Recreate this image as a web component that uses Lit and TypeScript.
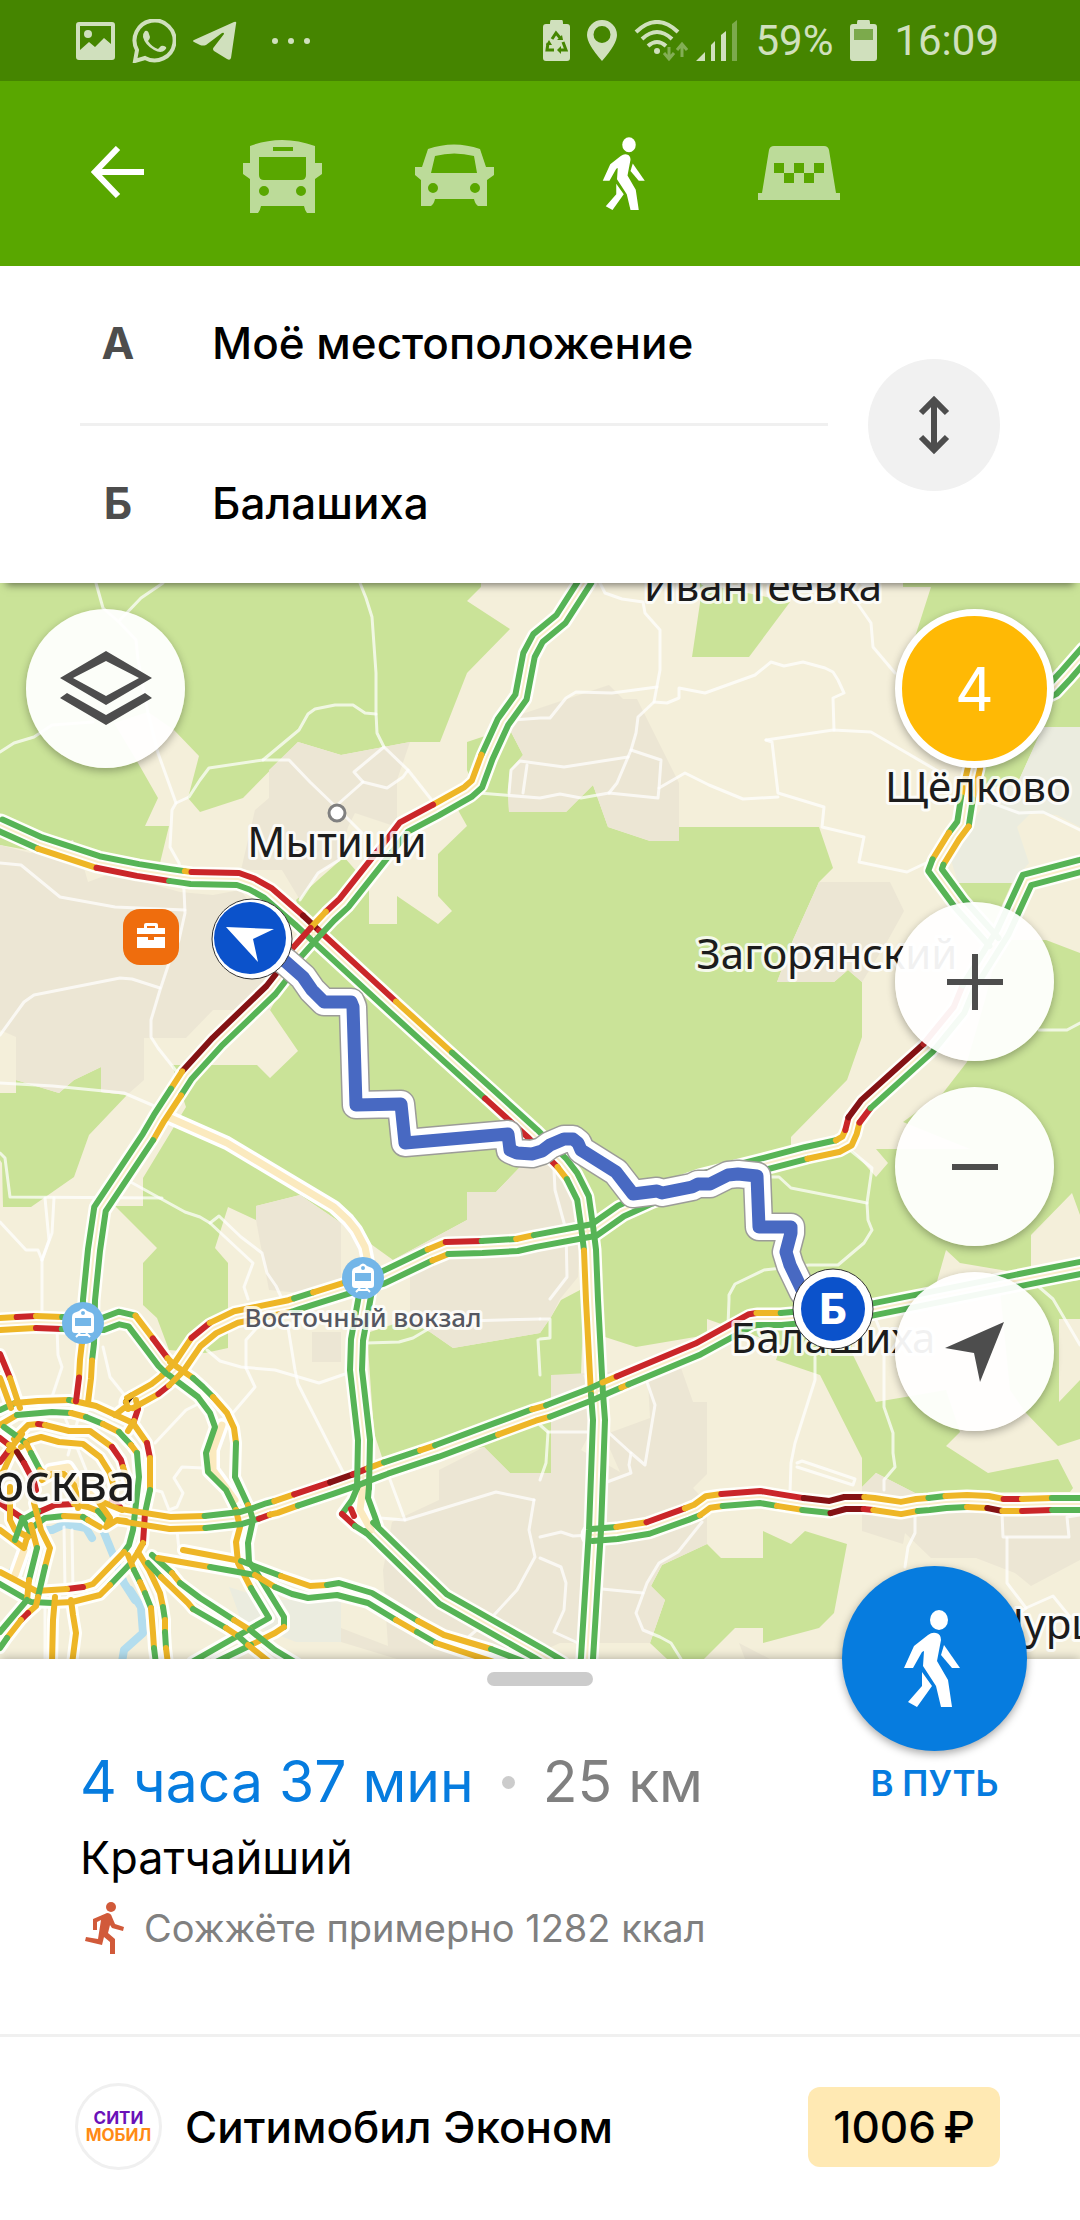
import { LitElement, html, svg, css } from "lit";
import { customElement, state } from "lit/decorators.js";

/* ---------- map data ---------- */

type Pt = [number, number];

const COLORS: Record<string, string> = {
  g: "#57b456",
  y: "#eeb626",
  r: "#ca2629",
  d: "#841214",
  k: "#2a0c0c",
};

const GREEN = [
  "0,583 481,583 481,587 467,601 510,629 467,673 440,742 410,742 341,755 298,742 243,798 200,812 188,798 199,756 174,730 148,712 114,723 138,763 158,798 145,826 169,826 160,863 150,874 60,856 0,845",
  "467,742 482,737 510,730 523,755 510,770 508,793 509,812 566,812 593,785 608,827 650,841 679,841 679,827 819,827 833,868 819,882 793,940 777,982 834,982 848,970 862,982 862,1037 847,1080 791,1137 791,1147 852,1150 876,1177 888,1163 876,1149 970,1149 903,1122 943,1093 967,1062 985,1000 1000,940 1046,940 1080,953 1080,1215 1072,1193 1031,1235 1031,1275 960,1263 946,1250 936,1285 872,1315 852,1325 852,1353 876,1402 946,1390 960,1432 946,1446 988,1473 1058,1459 1073,1488 1070,1492 915,1493 876,1473 862,1487 862,1458 820,1375 776,1360 781,1345 707,1319 707,1335 636,1347 605,1337 592,1300 583,1210 570,1180 540,1150 520,1167 496,1192 467,1192 467,1220 393,1260 368,1242 341,1223 300,1195 256,1206 256,1220 228,1207 215,1248 228,1263 228,1348 205,1353 169,1350 157,1318 143,1305 143,1263 157,1248 115,1206 143,1206 143,1178 186,1107 172,1065 257,1065 270,1078 298,1051 270,1010 305,950 369,878 369,924 397,924 397,896 438,924 452,911 438,896 438,854 467,826 458,810 475,790 467,770",
  "344,857 358,873 305,925 296,900 318,880",
  "16,1080 59,1093 74,1080 101,1067 101,1092 127,1095 89,1135 74,1177 31,1207 3,1207 2,1163 0,1160 0,1093 16,1093",
  "700,583 790,602 749,657 692,657 700,603",
  "903,583 1080,583 1080,727 1043,727 1019,780 985,790 915,660 915,637 931,587 903,587",
  "958,883 1012,883 990,932 974,912",
  "367,1333 406,1320 430,1332 453,1348 540,1333 551,1317 561,1300 580,1290 583,1320 581,1375 551,1375 551,1473 510,1473 484,1447 384,1463 374,1433",
  "1000,1290 1080,1280 1080,1319 1059,1319 1059,1402 1080,1380 1080,1439 1058,1446 1026,1413 1010,1390",
  "662,1565 707,1544 721,1558 763,1558 763,1531 791,1544 805,1531 847,1544 834,1613 819,1628 763,1643 763,1628 735,1628 704,1659 667,1659 650,1643 665,1600 651,1586",
];

const URBAN = [
  "298,742 341,755 410,742 397,780 397,827 355,813 348,827 339,860 318,873 300,900 282,870 241,870 255,810 269,798 269,770",
  "0,845 30,853 73,840 84,868 88,882 112,873 180,892 213,895 240,890 290,950 270,1010 213,1010 186,1038 144,1038 144,1080 127,1095 101,1092 101,1067 74,1080 59,1093 16,1080 16,1037 0,1030",
  "256,1206 300,1195 341,1223 341,1278 320,1295 269,1290 256,1220",
  "393,1260 467,1220 467,1192 496,1192 520,1167 560,1165 580,1220 578,1277 560,1299 551,1317 540,1333 453,1348 430,1332 410,1320 410,1268",
  "513,717 540,708 609,685 623,699 637,699 679,783 679,841 650,841 608,827 593,785 566,812 509,812 508,793 510,770 523,755 510,730",
  "819,882 890,882 904,911 888,940 862,982 848,970 834,982 777,982 793,940",
  "551,1375 681,1368 693,1402 707,1402 707,1474 693,1488 707,1503 707,1544 662,1565 651,1586 665,1600 650,1643 560,1643 540,1652 500,1659 397,1659 341,1642 341,1628 388,1646 383,1570 392,1522 439,1500 439,1470 484,1447 510,1473 551,1473",
  "312,1332 341,1332 341,1362 312,1362",
  "862,1487 876,1473 915,1493 1080,1500 1080,1560 1031,1586 1015,1573 976,1558 931,1558 905,1533 903,1544 862,1531",
  "739,1643 770,1659 745,1659",
];

const SAND = ["609,1433 583,1375 648,1382 650,1418", "581,1450 597,1420 620,1472"];

const GREY = [
  "1043,727 1080,727 1080,827 1057,815 1031,813 1017,827 1029,863 1012,883 958,883 951,860 988,797 1019,780",
  "229,1587 269,1600 341,1600 341,1642 296,1642 241,1620",
];

const LANES_MINOR = [
  "96,583 103,608 120,623 136,640 138,660 148,713 158,753 176,803 172,810 170,847 179,863 184,890 185,913 179,940 169,963 160,990 151,1020 151,1037 158,1048 177,1072",
  "163,583 141,598 120,620",
  "0,752 14,743 34,737 52,725 93,722",
  "360,583 366,598 372,617 376,673 376,713 377,733 384,747 408,770 434,803",
  "176,803 189,797 200,780 209,768 263,760 289,760 310,782 336,807 362,833",
  "263,760 299,730 308,714 315,709 335,705 353,705 365,713 376,714",
  "337,805 363,782 387,788 403,777 408,770",
  "363,782 354,772 384,747",
  "0,863 21,865 60,897 115,907 185,910",
  "300,900 318,873 339,860",
  "600,583 605,593 622,599 643,602 645,613 660,630 660,670 654,702 638,717 636,733 631,750 617,783 609,793",
  "513,720 540,718 550,718 566,698 576,692 612,693 657,687",
  "654,702 667,703 679,698 679,688 705,693 755,675 771,662 784,666 803,662 825,668 833,672 838,680 844,693 833,698 834,730",
  "766,740 833,730 871,732 936,770",
  "766,740 772,742 778,793 824,807 822,827 864,837 859,862 907,872 926,863",
  "778,797 743,799 709,785 685,773 659,788 661,760 631,750",
  "659,788 658,798 609,793 581,798 560,794 540,798 479,793",
  "509,793 511,770 520,761 564,767 628,757",
  "523,793 527,765",
  "848,590 871,623 873,647 895,673",
  "984,800 1019,813 1043,812 1080,830",
  "771,1177 779,1177 791,1188 867,1203 872,1168 850,1150",
  "867,1203 868,1220 872,1230 864,1243 838,1265 809,1265 764,1270 735,1284 729,1295 729,1300 728,1325",
  "1039,1030 1067,1030 1080,1023",
  "1039,1287 1053,1299 1080,1345",
  "554,1170 555,1190 566,1230 567,1277 550,1299",
  "815,1357 815,1380 795,1443 791,1463 790,1492",
  "797,1463 802,1461 855,1479 853,1485 797,1467",
  "876,1320 884,1340 884,1407 893,1433 893,1453 895,1467 884,1480 884,1490",
  "607,1482 631,1473 629,1465 631,1453 645,1465 652,1423 655,1405 647,1382",
  "609,1433 631,1453",
  "702,1522 678,1552 659,1563 647,1583 636,1613 643,1630 660,1637 671,1643 681,1659",
  "602,1589 643,1593",
  "540,1558 561,1567 566,1583 564,1610 554,1632 578,1643",
  "540,1537 561,1532 573,1536 592,1535",
  "540,1425 548,1432 590,1432",
  "548,1432 546,1463 540,1480",
  "540,1319 550,1319 550,1338 540,1339",
  "915,1513 915,1533 908,1547 905,1567",
  "1002,1513 1003,1537 1069,1537 1067,1517 1080,1515",
  "1007,1538 1007,1583 1026,1608",
  "1018,1614 1026,1608 1053,1596 1070,1617",
  "0,1083 53,1086 124,1093 152,1105 170,1115",
  "0,1153 5,1158 10,1197 162,1198",
  "127,1180 185,1212 200,1217 210,1223 253,1263 244,1287 248,1299",
  "210,1223 219,1216 241,1237 258,1250 262,1253 267,1273 276,1286 282,1299",
  "0,1222 26,1250 38,1250 42,1260 42,1330",
  "45,1198 49,1240 42,1260",
  "54,1198 52,1233 42,1260",
  "0,1035 24,1002 34,995 120,978 132,979 160,988",
  "57,1328 58,1355 62,1367 52,1397",
  "103,1347 110,1377 126,1397",
  "207,1350 220,1361 241,1367 275,1370 319,1383 348,1373",
  "246,1368 255,1387 238,1407 224,1423",
  "246,1368 246,1340 262,1322",
  "288,1327 295,1370 298,1384 343,1472",
  "155,1443 186,1410 200,1403",
  "367,1343 399,1342 413,1338 430,1328",
  "430,1322 540,1319",
  "389,1477 405,1520 496,1492 534,1500",
  "380,1518 405,1520",
  "534,1500 529,1530 535,1557 517,1590 494,1615 465,1640",
  "538,1340 540,1375",
  "203,1468 182,1467 174,1478 183,1493 177,1507 169,1510 162,1492 155,1490",
  "64,1527 65,1587",
  "72,1530 73,1590",
  "45,1580 45,1659",
  "62,1410 78,1450 86,1470",
  "82,1405 68,1455",
  "177,1530 179,1550",
];

const RIVERS = [
  "12,1572 28,1555 33,1530 52,1530 65,1524 86,1528 92,1538",
  "103,1530 114,1557 124,1583 135,1600",
  "130,1590 141,1607 143,1633 124,1650 122,1662",
];

const BEIGE_ROADS = [
  "168,1117 227,1143 334,1207 348,1220 356,1230 365,1247 368,1262",
  "222,1425 213,1450 213,1470 235,1500",
  "50,1470 68,1467 78,1482 96,1500",
  "15,1575 24,1550",
  "363,1486 360,1510 371,1530",
];

/* Dual carriageways: centre line, with ":LR" giving the traffic colour of the
   left and the right side from that point on. */
const DUAL = [
  "0,825:gg 40,843:gy 98,862:gr 138,870:gr 170,875:gg 184,877:yg 191,878:rg 238,879:rg 252,884:rg 268,893:rg 299,920:dg 315,935:rg 392,1006:yg 448,1057:gg 489,1094:gr 533,1134:gr 562,1163:gy 572,1176:gg 583,1198:gg 587,1226:gg 590,1250:gy 592,1300:gy 597,1394:gg 599,1420:gg 595,1530:gg 587,1658:gg 586,1664",
  "586,580:gg 561,619:gg 538,638:gg 529,655:gg 521,697:gg 503,722:gg 487,757:gy 477,784:gy 468,792:gy 436,810:gr 404,827:gr 394,840:gr 344,903:gr 330,916:gy 315,932:gr 290,960:gr 285,972:gd 271,990:gd 217,1042:gd 187,1075:gy 176,1092:yg 159,1118:yg 148,1137:gg 100,1209:gg 94,1250:gg 89,1300:gg 88,1343:gy 86,1360:yy 85,1378:yr 82,1402",
  "130,1403:yy 155,1389:yr 165,1381:yy 179,1367:yy 196,1342:ry 213,1328:yy 236,1317:yy 290,1306:yg 296,1304:gg 315,1298:yg 347,1288:gg 382,1278:gg 430,1255:yy 447,1248:rg 482,1247:gg 517,1245:yg 535,1241:gg 594,1230:gg 621,1211:gg 650,1198:gg 700,1180:gg 760,1165:gg 806,1153:gy 838,1146:yy 847,1141:yy 851,1132:ry 854,1120:dr 866,1104:dg 928,1048:rg 959,1010:rg 968,988:gg 1003,932:gg 1027,880:gg 1080,866:gg 1086,865",
  "1086,652:gg 1066,675:gg 1053,689:gg 1000,715:gg 976,740:yy 974,768:yy 967,798:gg 963,824:yg 954,836:yy 938,862:gg 935,870:gg 960,904:gg 994,942:gg",
  "120,1515:yy 170,1523:yy 205,1522:gg 241,1518:gg 257,1513:gr 268,1509:gy 276,1507:yy 296,1500:rg 332,1488:dg 355,1480:rg 370,1474:yg 386,1468:gg 422,1456:yg 437,1451:gg 496,1429:gy 534,1415:yy 548,1411:gg 592,1394:gg 605,1388:yg 619,1382:ry 626,1379:rg 698,1349:rg 751,1320:rg 757,1319:yg 781,1319:gg 860,1312:gg 1015,1281:gg 1080,1268:gg 1086,1267",
  "592,1535:gg 617,1533:yg 648,1528:rg 687,1514:yg 697,1510:yy 708,1502:yy 722,1500:rg 760,1497:rg 778,1500:ry 803,1504:dg 830,1507:dd 845,1503:dd 864,1503:yr 874,1504:yy 901,1508:yy 917,1505:yg 929,1504:gg 946,1502:yg 967,1501:yy 988,1502:yd 1003,1505:ry 1022,1505:yr 1052,1504:gg 1086,1504",
  "366,1290:gg 357,1340:gg 356,1370:gg 364,1440:gg 363,1488",
  "369,1527:gg 443,1599:gg 540,1654:gg 560,1666",
  "0,1324:yy 17,1323:ry 36,1322:yr 62,1323:gg 103,1324:gg 119,1318:gg 132,1321:yg 148,1342:rg 163,1362:yg 170,1369",
];

/* Single carriageways: ":C" is the traffic colour from that point on. */
const SINGLE = [
  "170,1362:y 193,1378:g 203,1387:g 213,1397:y 227,1413:y 234,1428:y 236,1443:g 235,1477:g 248,1505:y 250,1510:g 253,1520:g 248,1543:g 249,1562:g 257,1573:g 284,1617:g 284,1627:y 275,1633:y 251,1645:g 216,1662",
  "166,1373:g 198,1397:g 210,1413:g 215,1427:g 206,1453:g 208,1472:g 226,1490:g 236,1510:y 240,1527:y 236,1542:y 238,1563:y 251,1588:g 269,1618:g 248,1630:g 192,1662",
  "0,1410:g 15,1403:y 38,1401:y 69,1400:g 74,1401:y 96,1406:y 133,1423:y 147,1443:r 150,1458:y 150,1490:g 145,1513:r 143,1543:y 138,1552:y 131,1563:g 110,1585:y 100,1595:y 72,1602:y 53,1603:g 31,1602:g 0,1584",
  "0,1425:y 17,1415:g 52,1412:g 71,1413:y 86,1417:g 103,1424:y 119,1432:g 131,1445:y 137,1453:g 139,1477:g 133,1530:g 129,1545:g 124,1552:y 93,1584:y 83,1587:r 67,1589:y 36,1591:y 0,1572",
  "14,1439:y 28,1425:y 38,1424:r 45,1425:y 69,1431:y 90,1431:y 112,1447:r 121,1460:r 123,1467:y 128,1482",
  "21,1447:y 30,1440:y 41,1437:y 59,1442:y 83,1444:y 100,1457:y 110,1473:y 114,1487:y 112,1500:r 120,1507",
  "34,1514:r 55,1505:r 74,1504:y 88,1507:y 98,1511:g 106,1520:y",
  "33,1527:g 45,1518:g 64,1516:y 83,1517:g 88,1520:y 100,1527",
  "98,1501:y 110,1518:y 106,1527:y 117,1520:y 126,1521",
  "100,1501:y 122,1510",
  "12,1452:y 4,1470:y 0,1476",
  "0,1530:y 24,1548:y 28,1534",
  "0,1503:r 22,1518:g 32,1535:g",
  "10,1487:y 10,1520:y 15,1530:y 28,1537",
  "15,1540:g 22,1520:g 38,1511",
  "0,1354:r 10,1378:y 20,1408",
  "0,1378:y 11,1408",
  "4,1427:g 26,1443:y 31,1453:g 40,1470:y 48,1476",
  "0,1438:r 9,1445:y 17,1452:d 24,1463:r 34,1482:r 36,1490",
  "0,1462:r 9,1450:y 22,1434",
  "42,1480:y 52,1474:y 64,1474:y 74,1485:y 78,1500:y 78,1508",
  "34,1503:y 41,1530:y 50,1548:y 45,1567:g 38,1597:y 36,1606:y 28,1613:r 21,1620:y 7,1638:g 0,1648",
  "31,1525:y 37,1548:g 29,1580:y 27,1600:g 0,1632",
  "55,1597:y 53,1620:y 52,1664",
  "71,1600:y 73,1615:y 76,1633:y 72,1664",
  "128,1555:y 134,1570:g 140,1582:y 145,1593:g 151,1608:y 153,1633:y 154,1648:g 156,1664",
  "138,1552:y 149,1570:y 160,1593:y 163,1607:g 165,1620:y 165,1632:g 166,1648:y 168,1664",
  "152,1555:g 172,1573:y 180,1583:g 200,1598:g 234,1620:y 250,1630:g 275,1650:g 298,1664",
  "148,1563:g 161,1577:y 188,1603:y 193,1609:g 226,1628:y 238,1636:g 248,1645:y 272,1664",
  "183,1550:y 241,1561:g 281,1576:y 310,1586:y 327,1585:g 339,1583:g 372,1593:g 418,1621:y 444,1635:y 491,1649:g 530,1664",
  "158,1558:y 210,1567:g 255,1575:y 275,1587:g 292,1594:g 308,1598:g 337,1595:g 368,1603:g 396,1620:y 417,1632:g 436,1643:y 460,1651:y 500,1664",
  "136,1400:y 138,1409:r 134,1421:y 128,1431",
  "115,1415:y 124,1408:y 130,1408",
  "131,1396:k 126,1402:y 128,1409",
  "369,1486:g 368,1498:g 375,1517:g 378,1526",
  "358,1486:g 352,1500:g 342,1514:r 355,1526:g 366,1533",
  "351,1509:r 354,1516",
];

const ROUTE =
  "262,945 286,962 303,977 312,990 324,1002 351,1002 353,1007 356,1105 401,1104 405,1143 508,1134 510,1150 517,1153 532,1154 542,1151 550,1145 564,1139 573,1139 578,1143 581,1150 616,1172 633,1194 657,1191 662,1193 692,1187 698,1184 710,1184 728,1175 738,1174 757,1176 759,1227 791,1227 791,1233 786,1252 790,1265 803,1292 833,1308";

interface Label {
  text: string;
  x: number;
  y: number;
  cls: string;
}

const LABELS: Label[] = [
  { text: "Ивантеевка", x: 763, y: 601, cls: "town mid" },
  { text: "Щёлково", x: 978, y: 802, cls: "town mid" },
  { text: "Мытищи", x: 337, y: 857, cls: "town mid" },
  { text: "Загорянский", x: 827, y: 969, cls: "town mid" },
  { text: "Балашиха", x: 833, y: 1353, cls: "town mid" },
  { text: "Москва", x: 136, y: 1501, cls: "city end" },
  { text: "Чуршилово", x: 996, y: 1639, cls: "town" },
  { text: "Восточный вокзал", x: 363, y: 1327, cls: "station mid" },
];

interface Node {
  p: Pt;
  c: string;
}

const parse = (s: string): Node[] =>
  s.split(" ").map((item) => {
    const [xy, c = ""] = item.split(":");
    const [x, y] = xy.split(",").map(Number);
    return { p: [x, y] as Pt, c };
  });

const toPath = (pts: Pt[]) => "M" + pts.map((p) => p.join(" ")).join("L");

function shift(pts: Pt[], d: number): Pt[] {
  return pts.map((p, i) => {
    const unit = (a: Pt, b: Pt): Pt => {
      const dx = b[0] - a[0];
      const dy = b[1] - a[1];
      const l = Math.hypot(dx, dy) || 1;
      return [dy / l, -dx / l];
    };
    const n1 = i > 0 ? unit(pts[i - 1], p) : unit(p, pts[i + 1]);
    const n2 = i < pts.length - 1 ? unit(p, pts[i + 1]) : n1;
    const mx = n1[0] + n2[0];
    const my = n1[1] + n2[1];
    const k = (2 * d) / Math.max(mx * mx + my * my, 1);
    return [Math.round((p[0] + mx * k) * 10) / 10, Math.round((p[1] + my * k) * 10) / 10] as Pt;
  });
}

function runs(pts: Pt[], colors: string[]) {
  const out: { d: string; color: string }[] = [];
  let start = 0;
  for (let i = 1; i < pts.length; i++) {
    if (i === pts.length - 1 || (colors[i] && colors[i] !== colors[start])) {
      out.push({ d: toPath(pts.slice(start, i + 1)), color: COLORS[colors[start]] });
      start = i;
    }
  }
  return out;
}

const dual = DUAL.map(parse).map((nodes) => {
  const pts = nodes.map((n) => n.p);
  return {
    center: toPath(pts),
    lanes: [
      ...runs(shift(pts, 6), nodes.map((n) => n.c[0])),
      ...runs(shift(pts, -6), nodes.map((n) => n.c[1])),
    ],
  };
});

const single = SINGLE.map(parse).map((nodes) => {
  const pts = nodes.map((n) => n.p);
  return { center: toPath(pts), lanes: runs(pts, nodes.map((n) => n.c)) };
});

/* ---------- icons ---------- */

const walker = svg`
  <ellipse cx="4" cy="-39" rx="9" ry="10"></ellipse>
  <path d="M-21-13L-7-24Q-3-27 1-26Q6-25 6-19L2 2L13 21L17 48H6L1 27L-12 7L-11-8L-13-7L-22 9H-31Z"></path>
  <path d="M9-14L25 9H17L6-4Z"></path>
  <path d="M-13 13L-3 27L-18 48L-27 43L-13 27Z"></path>`;

const icons = {
  back: html`<svg width="54" height="52" viewBox="0 0 54 52"><path d="M27 2L4 26L27 50M5 26H53" fill="none" stroke="#fff" stroke-width="6"></path></svg>`,
  bus: html`<svg class="glyph" width="96" height="80" viewBox="-48 -40 96 80"><path fill-rule="evenodd" d="M-32-28Q0-40 33-28V-11H40V0L33 5V39H25Q23 37 22 32H-21Q-22 37-24 39H-32V5L-39 0V-11H-32ZM-9-27V-23H11V-27ZM-23-17V1Q-23 6-18 6H19Q24 6 24 1V-17ZM-23 17A5 5 0 1 0-13 17A5 5 0 1 0-23 17ZM14 17A5 5 0 1 0 24 17A5 5 0 1 0 14 17Z"></path></svg>`,
  car: html`<svg class="glyph" width="96" height="80" viewBox="-48 -40 96 80"><path fill-rule="evenodd" d="M-26-25Q0-34 26-25L32-7H40V1L33 6V32H24Q21 30 20 25H-19Q-20 30-23 32H-33V6L-39 1V-7H-32ZM-19-18L-23-1H23L20-18Q0-23-19-18ZM-26 14A5 5 0 1 0-16 14A5 5 0 1 0-26 14ZM16 14A5 5 0 1 0 26 14A5 5 0 1 0 16 14Z"></path></svg>`,
  walk: html`<svg class="glyph" width="54" height="76" viewBox="-36 -50 72 100">${walker}</svg>`,
  taxi: html`<svg class="glyph" width="96" height="80" viewBox="-48 -40 96 80"><path fill-rule="evenodd" d="M-40 19H-36L-29-24Q-28-28-24-28H26Q30-28 31-24L38 19H42V26H-40ZM-24-11V-1H-14V9H-4V-1H6V9H16V-1H26V-11H16V-1H6V-11H-4V-1H-14V-11Z"></path></svg>`,
  walkBig: html`<svg class="glyph" width="72" height="100" viewBox="-36 -50 72 100">${walker}</svg>`,
  swap: html`<svg width="32" height="60" viewBox="0 0 32 60"><path d="M16 5V55M3 18L16 5L29 18M3 42L16 55L29 42" fill="none" stroke="#4d4d4d" stroke-width="6"></path></svg>`,
  layers: html`<svg width="94" height="76" viewBox="-47 -38 94 76" fill="#4d4d4d"><path fill-rule="evenodd" d="M0-38L46-11L0 16L-46-11ZM0-28L-33-11L0 7L33-11Z"></path><path d="M-46 9L-39 4L0 26L39 4L46 9L0 36Z"></path></svg>`,
  plus: html`<svg width="56" height="56" viewBox="0 0 56 56"><path d="M28 0V56M0 28H56" stroke="#4d4d4d" stroke-width="6"></path></svg>`,
  minus: html`<svg width="46" height="6" viewBox="0 0 46 6"><path d="M0 3H46" stroke="#4d4d4d" stroke-width="6"></path></svg>`,
  locate: html`<svg width="60" height="60" viewBox="0 0 60 60"><path d="M56 0L32 60L26 31L-3 26Z" fill="#4d4d4d" transform="translate(3 0)"></path></svg>`,
  runner: html`<svg width="40" height="52" viewBox="0 0 40 52" fill="#d15a3a"><ellipse cx="26" cy="5" rx="5" ry="5"></ellipse><path d="M8 17L22 11Q26 11 27 15L30 22L39 25L38 29L27 26L25 23L23 31L30 37V52H25V40L19 35L17 43L0 39L1 35L13 37L16 18L12 20V28H8Z"></path></svg>`,
  image: html`<svg width="39" height="40" viewBox="0 0 39 40"><path fill-rule="evenodd" d="M3 1H36Q39 1 39 4V36Q39 39 36 39H3Q0 39 0 36V4Q0 1 3 1ZM4 5V29L13 21L19 26L28 17L35 23V5Z"></path><circle cx="12" cy="13" r="4"></circle></svg>`,
  chat: html`<svg width="44" height="44" viewBox="0 0 44 44"><path d="M3 42L5 31A20 20 0 1 1 13 39Z" fill="none" stroke="currentColor" stroke-width="4"></path><path d="M13 12Q16 11 17 15L18 18Q18 20 16 22Q20 28 26 30L29 27Q31 26 34 28Q35 29 33 31Q29 35 22 31Q13 26 11 18Q11 14 13 12Z"></path></svg>`,
  plane: html`<svg width="44" height="40" viewBox="0 0 44 40"><path d="M1 19L41 1Q44 0 43 3L38 37Q37 40 34 38L21 30Q19 28 21 26L31 13Q31 11 29 12L13 24Q10 25 7 24L1 21Q-1 20 1 19Z"></path></svg>`,
  dots: html`<svg width="38" height="8" viewBox="0 0 38 8"><circle cx="3" cy="4" r="3"></circle><circle cx="19" cy="4" r="3"></circle><circle cx="35" cy="4" r="3"></circle></svg>`,
  recycle: html`<svg width="27" height="41" viewBox="0 0 27 41"><path d="M8 0H19Q20 0 20 4H24Q27 4 27 7V38Q27 41 24 41H3Q0 41 0 38V7Q0 4 3 4H7Q7 0 8 0Z"></path><path d="M9 19L13 13L18 19M5 23L4 30H11M16 30H23L20 22" fill="none" stroke="#458500" stroke-width="3"></path><path d="M14 30L18 26V34ZM20 20L14 20L19 15ZM6 20L9 25L3 25Z" fill="#458500"></path></svg>`,
  pin: html`<svg width="30" height="41" viewBox="0 0 30 41"><path fill-rule="evenodd" d="M15 0A15 15 0 0 1 30 15Q30 24 15 41Q0 24 0 15A15 15 0 0 1 15 0ZM15 6A8 8 0 1 0 15 23A8 8 0 1 0 15 6Z"></path></svg>`,
  wifi: html`<svg width="54" height="42" viewBox="0 0 54 42"><g fill="none" stroke="currentColor" stroke-width="4"><path d="M2 12Q23-8 44 12"></path><path d="M8 19Q23 5 38 19"></path><path d="M14 26Q23 18 32 26"></path></g><circle cx="23" cy="31" r="3"></circle><g fill="none" stroke="currentColor" stroke-width="3" opacity="0.45"><path d="M35 27V38M30 33L35 39L40 33"></path><path d="M48 37V26M43 30L48 24L53 30"></path></g></svg>`,
  signal: html`<svg width="42" height="41" viewBox="0 0 42 41"><path d="M0 41L9 32V41ZM15 25L19 21V41H15ZM25 15L30 11V41H25Z"></path><path d="M36 4L41 0V41H36Z" opacity="0.4"></path></svg>`,
  battery: html`<svg width="27" height="41" viewBox="0 0 27 41"><path d="M8 0H19Q20 0 20 4H24Q27 4 27 7V38Q27 41 24 41H3Q0 41 0 38V7Q0 4 3 4H7Q7 0 8 0Z"></path><rect x="4" y="9" width="19" height="11" fill="#458500" opacity="0.6"></rect></svg>`,
};

const train = (x: number, y: number) => svg`
  <g transform="translate(${x} ${y})">
    <circle r="21" fill="#73b6e8"></circle>
    <path fill="#fff" fill-rule="evenodd" d="M-4-12Q0-17 4-12L9-10Q11-9 11-6V7Q11 10 8 10H-8Q-11 10-11 7V-6Q-11-9-9-10ZM-8-5V3H8V-5ZM-2-10A2 2 0 1 0 2-10A2 2 0 1 0-2-10Z"></path>
    <path d="M-3 10L-7 14M3 10L7 14M-5 12H5" stroke="#fff" stroke-width="2"></path>
  </g>`;

/* ---------- elements ---------- */

@customElement("route-map")
export class RouteMap extends LitElement {
  static styles = css`
    :host {
      display: block;
      position: relative;
      overflow: hidden;
      background: #f4efda;
    }
    .canvas {
      position: absolute;
      inset: 0;
      width: 100%;
      height: 100%;
    }
    .lines {
      fill: none;
      stroke-linejoin: round;
      stroke-linecap: round;
    }
    text {
      font-family: "Noto Sans", "Open Sans", sans-serif;
      fill: #1c1c1c;
      stroke: #ffffffd0;
      stroke-width: 6px;
      stroke-linejoin: round;
      paint-order: stroke;
    }
    .town {
      font-size: 42px;
    }
    .city {
      font-size: 52px;
    }
    .station {
      font-size: 26px;
      font-weight: 500;
      fill: #555761;
    }
    .mid {
      text-anchor: middle;
    }
    .end {
      text-anchor: end;
    }
    .pin {
      font-family: Inter, Roboto, sans-serif;
      font-size: 42px;
      font-weight: 800;
      fill: #fff;
      stroke: none;
    }
  `;

  render() {
    return html`
      <svg class="canvas" viewBox="0 583 1080 1076" preserveAspectRatio="xMidYMid slice" role="img" aria-label="Карта">
        ${GREEN.map((p) => svg`<polygon points=${p} fill="#cae398"></polygon>`)}
        ${URBAN.map((p) => svg`<polygon points=${p} fill="#ece6d4"></polygon>`)}
        ${SAND.map((p) => svg`<polygon points=${p} fill="#f4efda"></polygon>`)}
        ${GREY.map((p) => svg`<polygon points=${p} fill="#ebecdf"></polygon>`)}
        <g class="lines">
          <g stroke="#b3ddee" stroke-width="8">${RIVERS.map((p) => svg`<polyline points=${p}></polyline>`)}</g>
          <g stroke="#fff" stroke-opacity="0.72" stroke-width="3">
            ${LANES_MINOR.map((p) => svg`<polyline points=${p}></polyline>`)}
          </g>
          <g stroke="#fff" stroke-width="14">${BEIGE_ROADS.map((p) => svg`<polyline points=${p}></polyline>`)}</g>
          <g stroke="#fffffb" stroke-width="23">${dual.map((r) => svg`<path d=${r.center}></path>`)}</g>
          <g stroke="#fffffb" stroke-width="12">${single.map((r) => svg`<path d=${r.center}></path>`)}</g>
          <g stroke="#fbeabf" stroke-width="7">${BEIGE_ROADS.map((p) => svg`<polyline points=${p}></polyline>`)}</g>
          <g stroke="#fbeecb" stroke-width="2">${dual.map((r) => svg`<path d=${r.center}></path>`)}</g>
          <g stroke-width="6">
            ${[...single, ...dual].map((r) =>
              r.lanes.map((l) => svg`<path d=${l.d} stroke=${l.color}></path>`)
            )}
          </g>
        </g>
        ${train(363, 1278)} ${train(83, 1323)}
        <circle cx="337" cy="813" r="8" fill="#fff" stroke="#808080" stroke-width="3"></circle>
        ${LABELS.map((l) => svg`<text class=${l.cls} x=${l.x} y=${l.y}>${l.text}</text>`)}
        <g class="lines">
          <polyline points=${ROUTE} stroke="#9c9c98" stroke-width="29"></polyline>
          <polyline points=${ROUTE} stroke="#fff" stroke-width="26"></polyline>
          <polyline points=${ROUTE} stroke="#4869c2" stroke-width="13"></polyline>
        </g>
        <rect x="123" y="909" width="56" height="56" rx="17" fill="#ef6d0d"></rect>
        <path fill="#fff" fill-rule="evenodd" d="M144 928V925Q144 923 146 923H156Q158 923 158 925V928H165V934H137V928ZM147 926V928H155V926ZM137 937H148V940H154V937H165V948H137Z"></path>
        <circle cx="252" cy="939" r="40" fill="#fff" stroke="#333" stroke-width="1"></circle>
        <circle cx="250" cy="938" r="36" fill="#0b52cb"></circle>
        <path d="M226 927L274 929L253 939L258 962Z" fill="#fff"></path>
        <circle cx="833" cy="1309" r="40" fill="#fff" stroke="#333" stroke-width="1"></circle>
        <circle cx="833" cy="1309" r="32" fill="#0b52cb"></circle>
        <text class="pin mid" x="833" y="1324">Б</text>
      </svg>
      <slot></slot>
    `;
  }
}

@customElement("app-root")
export class AppRoot extends LitElement {
  static styles = css`
    :host {
      display: flex;
      flex-direction: column;
      min-height: 100vh;
      background: #fff;
      color: #000;
      font-family: Inter, Roboto, sans-serif;
    }
    * {
      box-sizing: border-box;
    }
    svg {
      display: block;
      flex: none;
    }
    button,
    input {
      font: inherit;
      color: inherit;
      border: 0;
      padding: 0;
      margin: 0;
      background: none;
    }
    button {
      display: flex;
      align-items: center;
      justify-content: center;
    }
    .status {
      display: flex;
      align-items: center;
      justify-content: space-between;
      height: 81px;
      padding: 0 81px 0 76px;
      background: #458500;
      color: #d0e0bd;
      fill: #d0e0bd;
      font-family: Roboto, sans-serif;
      font-size: 42px;
    }
    .group {
      display: flex;
      align-items: center;
      gap: 17px;
    }
    .more {
      margin-left: 18px;
    }
    .radio {
      display: flex;
      gap: 8px;
    }
    .bar {
      display: flex;
      height: 185px;
      padding-left: 40px;
      background: #59a700;
    }
    .back {
      width: 156px;
      padding-bottom: 4px;
    }
    .tabs {
      display: flex;
    }
    .tab {
      width: 172px;
      opacity: 0.6;
    }
    .tab.on {
      opacity: 1;
    }
    .glyph {
      fill: #fff;
    }
    .route {
      position: relative;
      z-index: 1;
      display: flex;
      align-items: center;
      gap: 40px;
      padding: 0 80px;
      background: #fff;
      box-shadow: 0 8px 8px -6px rgba(0, 0, 0, 0.5);
    }
    .fields {
      flex: 1;
      min-width: 0;
    }
    .field {
      display: flex;
      align-items: center;
      height: 157px;
      padding-bottom: 3px;
    }
    .field + .field {
      border-top: 3px solid #f0f0f0;
      height: 160px;
    }
    .field label {
      width: 76px;
      margin-right: 56px;
      text-align: center;
      font-size: 44px;
      font-weight: 700;
      color: #4d4d4d;
    }
    .field input {
      flex: 1;
      min-width: 0;
      height: 60px;
      font-size: 44px;
      font-weight: 500;
      text-overflow: ellipsis;
    }
    .swap {
      flex: none;
      width: 132px;
      height: 132px;
      border-radius: 50%;
      background: #f1f1f1;
    }
    .map {
      flex: 1;
      min-height: 860px;
    }
    .stack {
      position: absolute;
      display: flex;
      flex-direction: column;
      gap: 26px;
    }
    .top-left {
      top: 26px;
      left: 26px;
    }
    .top-right {
      top: 26px;
      right: 26px;
    }
    .bottom-right {
      bottom: 228px;
      right: 26px;
    }
    .round {
      width: 159px;
      height: 159px;
      border-radius: 50%;
      background: rgba(255, 255, 255, 0.94);
      box-shadow: 0 3px 8px rgba(0, 0, 0, 0.3);
    }
    .traffic {
      border: 7px solid #fff;
      background: #ffb905;
      color: #fff;
      font-size: 60px;
      font-weight: 400;
    }
    .sheet {
      position: relative;
      background: #fff;
      box-shadow: 0 0 10px rgba(0, 0, 0, 0.3);
    }
    .handle {
      width: 106px;
      height: 14px;
      margin: 0 auto;
      border-radius: 7px;
      background: #ccc;
    }
    .summary {
      padding: 13px 80px 80px;
      border-bottom: 3px solid #f0f0f0;
    }
    .figures {
      display: flex;
      align-items: center;
      gap: 28px;
      margin: 60px 0 12px;
      font-size: 57px;
      line-height: 72px;
      color: #808080;
    }
    .time {
      color: #067cdf;
    }
    .dot {
      width: 13px;
      height: 13px;
      border-radius: 50%;
      background: #ccc;
    }
    .kind {
      font-size: 45px;
      line-height: 56px;
    }
    .burn {
      display: flex;
      align-items: center;
      gap: 19px;
      margin-top: 16px;
      padding-left: 5px;
      font-size: 38px;
      line-height: 52px;
      color: #808080;
    }
    .go {
      position: absolute;
      top: -93px;
      right: 53px;
      flex-direction: column;
      gap: 10px;
      font-size: 35px;
      line-height: 44px;
      font-weight: 600;
      color: #067cdf;
    }
    .disc {
      display: flex;
      align-items: center;
      justify-content: center;
      width: 185px;
      height: 185px;
      border-radius: 50%;
      background: #067cdf;
      box-shadow: 0 3px 8px rgba(0, 0, 0, 0.35);
    }
    .offer {
      display: flex;
      align-items: center;
      gap: 23px;
      padding: 46px 80px 50px 75px;
      color: inherit;
      text-decoration: none;
      font-size: 44px;
      line-height: 56px;
      font-weight: 500;
    }
    .logo {
      display: flex;
      flex-direction: column;
      align-items: center;
      justify-content: center;
      width: 87px;
      height: 87px;
      border: 3px solid #f0f0f0;
      border-radius: 50%;
      font-size: 17px;
      line-height: 17px;
      font-weight: 700;
      color: #ff8a14;
    }
    .logo .upper {
      color: #6a11b8;
    }
    .name {
      flex: 1;
    }
    .price {
      padding: 12px 25px;
      border-radius: 12px;
      background: #ffe9b3;
      white-space: nowrap;
    }
  `;

  @state() private mode = "walk";

  private tab(id: string, label: string, icon: unknown) {
    return html`<button
      class="tab ${this.mode === id ? "on" : ""}"
      aria-label=${label}
      aria-pressed=${this.mode === id}
      @click=${() => (this.mode = id)}
    >${icon}</button>`;
  }

  render() {
    return html`
      <div class="status">
        <div class="group">${icons.image} ${icons.chat} ${icons.plane}<span class="more">${icons.dots}</span></div>
        <div class="group">
          ${icons.recycle} ${icons.pin}
          <span class="radio">${icons.wifi} ${icons.signal}</span>
          <span>59%</span>
          ${icons.battery}
          <span>16:09</span>
        </div>
      </div>
      <nav class="bar">
        <button class="back" aria-label="Назад">${icons.back}</button>
        <div class="tabs">
          ${this.tab("bus", "Автобус", icons.bus)} ${this.tab("car", "Автомобиль", icons.car)}
          ${this.tab("walk", "Пешком", icons.walk)} ${this.tab("taxi", "Такси", icons.taxi)}
        </div>
      </nav>
      <form class="route" @submit=${(e: Event) => e.preventDefault()}>
        <div class="fields">
          <div class="field">
            <label for="from">А</label>
            <input id="from" type="text" .value=${"Моё местоположение"} />
          </div>
          <div class="field">
            <label for="to">Б</label>
            <input id="to" type="text" .value=${"Балашиха"} />
          </div>
        </div>
        <button class="swap" type="button" aria-label="Поменять местами">${icons.swap}</button>
      </form>
      <route-map class="map">
        <div class="stack top-left">
          <button class="round" aria-label="Слои">${icons.layers}</button>
        </div>
        <div class="stack top-right">
          <button class="round traffic" title="Пробки">4</button>
        </div>
        <div class="stack bottom-right">
          <button class="round" aria-label="Приблизить">${icons.plus}</button>
          <button class="round" aria-label="Отдалить">${icons.minus}</button>
          <button class="round" aria-label="Моё местоположение">${icons.locate}</button>
        </div>
      </route-map>
      <section class="sheet">
        <div class="summary">
          <div class="handle"></div>
          <div class="figures">
            <span class="time">4 часа 37 мин</span><span class="dot"></span><span>25 км</span>
          </div>
          <div class="kind">Кратчайший</div>
          <div class="burn">${icons.runner}<span>Сожжёте примерно 1282 ккал</span></div>
        </div>
        <button class="go"><span class="disc">${icons.walkBig}</span><span>В ПУТЬ</span></button>
        <a class="offer" href="#taxi">
          <span class="logo"><span class="upper">СИТИ</span><span>МОБИЛ</span></span>
          <span class="name">Ситимобил Эконом</span>
          <span class="price">1006&thinsp;₽</span>
        </a>
      </section>
    `;
  }
}
